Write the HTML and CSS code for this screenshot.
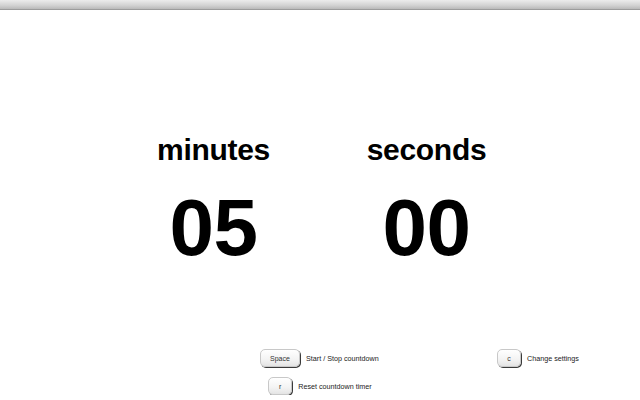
FILE: index.html
```html
<!DOCTYPE html>
<html>
<head>
<meta charset="utf-8">
<link rel="stylesheet" href="styles.css">
</head>
<body>
<div class="topbar"></div>
<main class="timer">
  <div class="unit">
    <div class="label">minutes</div>
    <div class="value">05</div>
  </div>
  <div class="unit">
    <div class="label">seconds</div>
    <div class="value">00</div>
  </div>
</main>
<section class="shortcuts">
  <div class="row row-first">
    <div class="item item-wide"><span class="key key-space">Space</span><span class="desc">Start / Stop countdown</span></div>
    <div class="item"><span class="key key-small">c</span><span class="desc">Change settings</span></div>
  </div>
  <div class="row row-second">
    <div class="item"><span class="key key-small">r</span><span class="desc">Reset countdown timer</span></div>
  </div>
</section>
</body>
</html>
```
FILE: styles.css
```css
html, body {
  margin: 0;
  padding: 0;
  background: #fff;
  font-family: "Liberation Sans", Arial, sans-serif;
  color: #000;
}
.topbar {
  height: 9px;
  background: linear-gradient(#ececec, #d2d2d2 60%, #b9b9b9);
  border-bottom: 1px solid #9c9c9c;
}
.timer {
  display: flex;
  justify-content: center;
  padding-top: 123px;
}
.unit {
  width: 213px;
  text-align: center;
}
.label {
  font-size: 30px;
  font-weight: bold;
  line-height: 34px;
  letter-spacing: -0.3px;
}
.value {
  margin-top: 16px;
  font-size: 80px;
  font-weight: bold;
  line-height: 90px;
  letter-spacing: -0.5px;
}
.shortcuts {
  margin-top: 76px;
  font-size: 7.2px;
  color: #222;
}
.row {
  display: flex;
  height: 18px;
}
.row-first {
  padding-left: 260px;
}
.row-second {
  margin-top: 10px;
  justify-content: center;
}
.item {
  display: flex;
  align-items: center;
  gap: 6px;
}
.item-wide {
  width: 237px;
}
.key {
  box-sizing: border-box;
  height: 18px;
  display: flex;
  align-items: center;
  justify-content: center;
  border: 1px solid #c8c8c8;
  border-radius: 5px;
  background: linear-gradient(#ffffff, #f3f3f3 60%, #e4e4e4);
  box-shadow: 1px 1px 0 #3a3a3a;
  font-size: 7px;
  color: #333;
}
.key-space {
  width: 40px;
}
.key-small {
  width: 24px;
}
```
